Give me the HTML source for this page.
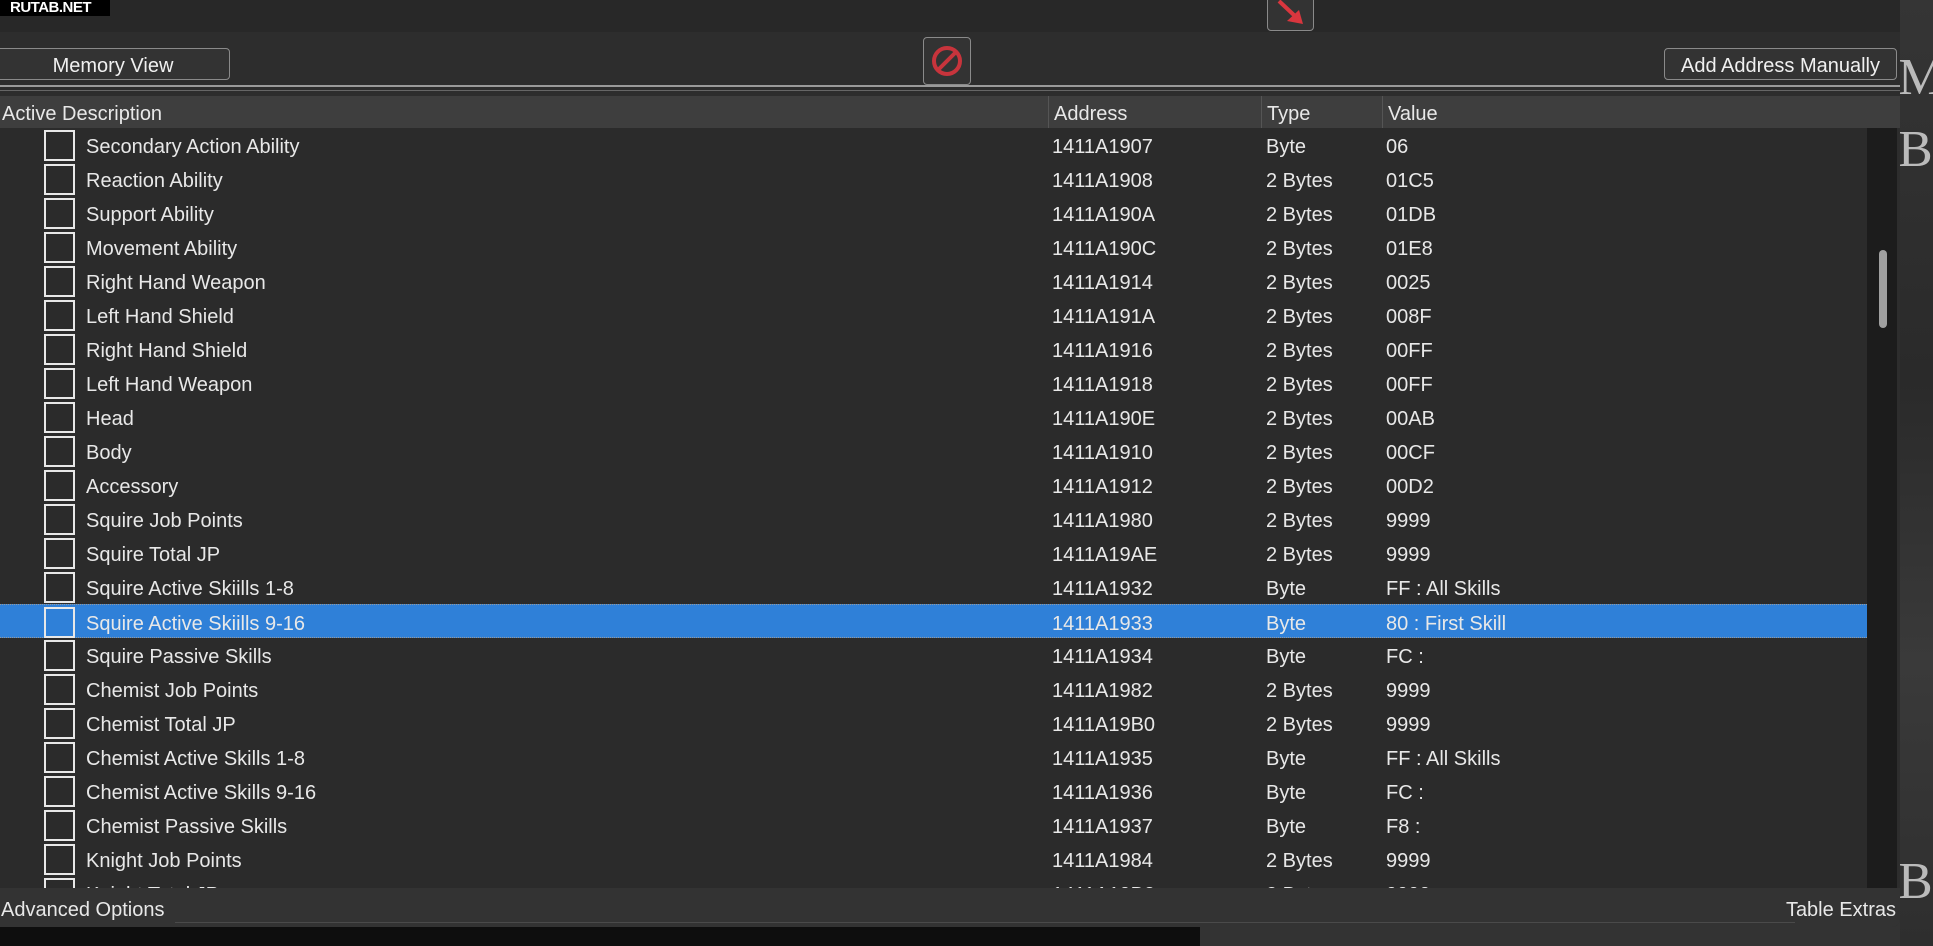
<!DOCTYPE html>
<html><head><meta charset="utf-8"><style>
*{margin:0;padding:0;box-sizing:border-box}
body{width:1933px;height:946px;overflow:hidden;background:#333;font-family:"Liberation Sans",sans-serif;color:#e8e8e8;position:relative}
.bg{position:absolute;left:1900px;top:0;width:33px;height:946px;background:linear-gradient(180deg,#353535,#2a2a2a 40%,#3a3a3a 70%,#2e2e2e)}
.bgl{position:absolute;font-family:"Liberation Serif",serif;color:#bbb;font-size:52px}
.win{position:absolute;left:0;top:0;width:1900px;height:927px;background:#2d2d2d;border-bottom-right-radius:8px}
.topdark{position:absolute;left:0;top:0;width:1900px;height:32px;background:#282828}
.logo{position:absolute;left:0;top:0;width:110px;height:16px;background:#000;color:#fff;font-weight:bold;font-size:15px;line-height:16px;padding-left:10px;letter-spacing:-0.5px}
.btn{position:absolute;border:1px solid #8a8a8a;border-radius:4px;background:#333;color:#f0f0f0;font-size:20px;text-align:center}
.sep{position:absolute;left:0;width:1900px;height:2px;background:#9a9a9a}
.hdr{position:absolute;left:0;top:96px;width:1900px;height:32px;background:#3e3e3e;font-size:20px;line-height:36px}
.hdr span{position:absolute;top:0}
.tbl{position:absolute;left:0;top:128px;width:1867px;height:760px;overflow:hidden;background:#2b2b2b}
.row{position:absolute;left:0;width:1867px;height:34px;font-size:20px;line-height:38px}
.row.sel{background:#2f80d8;border-top:1px dotted #999;border-bottom:1px dotted #999}
.cb{position:absolute;left:44px;top:2px;width:31px;height:31px;border:2px solid #e8e8e8}
.row span{position:absolute;top:0}
.sb{position:absolute;left:1867px;top:128px;width:30px;height:760px;background:#1c1c1c}
.thumb{position:absolute;left:1879px;top:250px;width:8px;height:78px;background:#a0a0a0;border-radius:4px}
.bot{position:absolute;left:0;top:888px;width:1900px;height:39px;background:#333;font-size:20px;line-height:44px;border-bottom-right-radius:8px}
.below{position:absolute;left:0;top:927px;width:1200px;height:19px;background:#0e0e0e}
</style></head><body>
<div class="bg"></div>
<div class="bgl" style="left:1898px;top:48px">M</div>
<div class="bgl" style="left:1898px;top:120px">B</div>
<div class="bgl" style="left:1898px;top:852px">B</div>
<div class="below"></div>
<div class="win">
<div class="topdark"></div>
<div class="logo">RUTAB.NET</div>
<div class="btn" style="left:1267px;top:-4px;width:47px;height:35px">
<svg width="47" height="35" viewBox="0 0 47 35" style="position:absolute;left:-1px;top:0"><line x1="12" y1="4" x2="29" y2="20" stroke="#d9363e" stroke-width="4"/><polygon points="36,27 20,24 32,13" fill="#d9363e"/></svg></div>
<div class="btn" style="left:-4px;top:48px;width:234px;height:32px;line-height:34px">Memory View</div>
<div class="btn" style="left:923px;top:37px;width:48px;height:48px">
<svg width="46" height="46" viewBox="0 0 46 46" style="position:absolute;left:0;top:0"><circle cx="23" cy="23" r="13" fill="none" stroke="#c8343c" stroke-width="4"/><line x1="14" y1="32" x2="32" y2="14" stroke="#c8343c" stroke-width="4"/></svg></div>
<div class="btn" style="left:1664px;top:48px;width:233px;height:32px;line-height:34px">Add Address Manually</div>
<div class="sep" style="top:85px"></div>
<div class="sep" style="top:90px;height:1px;background:#666"></div>
<div class="hdr"><span style="left:2px">Active Description</span><span style="left:1054px">Address</span><span style="left:1267px">Type</span><span style="left:1388px">Value</span>
<div style="position:absolute;left:1048px;top:0;width:1px;height:32px;background:#555"></div>
<div style="position:absolute;left:1261px;top:0;width:1px;height:32px;background:#555"></div>
<div style="position:absolute;left:1382px;top:0;width:1px;height:32px;background:#555"></div></div>
<div class="tbl">
<div class="row" style="top:0"><div class="cb"></div><span style="left:86px">Secondary Action Ability</span><span style="left:1052px">1411A1907</span><span style="left:1266px">Byte</span><span style="left:1386px">06</span></div>
<div class="row" style="top:34px"><div class="cb"></div><span style="left:86px">Reaction Ability</span><span style="left:1052px">1411A1908</span><span style="left:1266px">2 Bytes</span><span style="left:1386px">01C5</span></div>
<div class="row" style="top:68px"><div class="cb"></div><span style="left:86px">Support Ability</span><span style="left:1052px">1411A190A</span><span style="left:1266px">2 Bytes</span><span style="left:1386px">01DB</span></div>
<div class="row" style="top:102px"><div class="cb"></div><span style="left:86px">Movement Ability</span><span style="left:1052px">1411A190C</span><span style="left:1266px">2 Bytes</span><span style="left:1386px">01E8</span></div>
<div class="row" style="top:136px"><div class="cb"></div><span style="left:86px">Right Hand Weapon</span><span style="left:1052px">1411A1914</span><span style="left:1266px">2 Bytes</span><span style="left:1386px">0025</span></div>
<div class="row" style="top:170px"><div class="cb"></div><span style="left:86px">Left Hand Shield</span><span style="left:1052px">1411A191A</span><span style="left:1266px">2 Bytes</span><span style="left:1386px">008F</span></div>
<div class="row" style="top:204px"><div class="cb"></div><span style="left:86px">Right Hand Shield</span><span style="left:1052px">1411A1916</span><span style="left:1266px">2 Bytes</span><span style="left:1386px">00FF</span></div>
<div class="row" style="top:238px"><div class="cb"></div><span style="left:86px">Left Hand Weapon</span><span style="left:1052px">1411A1918</span><span style="left:1266px">2 Bytes</span><span style="left:1386px">00FF</span></div>
<div class="row" style="top:272px"><div class="cb"></div><span style="left:86px">Head</span><span style="left:1052px">1411A190E</span><span style="left:1266px">2 Bytes</span><span style="left:1386px">00AB</span></div>
<div class="row" style="top:306px"><div class="cb"></div><span style="left:86px">Body</span><span style="left:1052px">1411A1910</span><span style="left:1266px">2 Bytes</span><span style="left:1386px">00CF</span></div>
<div class="row" style="top:340px"><div class="cb"></div><span style="left:86px">Accessory</span><span style="left:1052px">1411A1912</span><span style="left:1266px">2 Bytes</span><span style="left:1386px">00D2</span></div>
<div class="row" style="top:374px"><div class="cb"></div><span style="left:86px">Squire Job Points</span><span style="left:1052px">1411A1980</span><span style="left:1266px">2 Bytes</span><span style="left:1386px">9999</span></div>
<div class="row" style="top:408px"><div class="cb"></div><span style="left:86px">Squire Total JP</span><span style="left:1052px">1411A19AE</span><span style="left:1266px">2 Bytes</span><span style="left:1386px">9999</span></div>
<div class="row" style="top:442px"><div class="cb"></div><span style="left:86px">Squire Active Skiills 1-8</span><span style="left:1052px">1411A1932</span><span style="left:1266px">Byte</span><span style="left:1386px">FF : All Skills</span></div>
<div class="row sel" style="top:476px"><div class="cb"></div><span style="left:86px">Squire Active Skiills 9-16</span><span style="left:1052px">1411A1933</span><span style="left:1266px">Byte</span><span style="left:1386px">80 : First Skill</span></div>
<div class="row" style="top:510px"><div class="cb"></div><span style="left:86px">Squire Passive Skills</span><span style="left:1052px">1411A1934</span><span style="left:1266px">Byte</span><span style="left:1386px">FC :</span></div>
<div class="row" style="top:544px"><div class="cb"></div><span style="left:86px">Chemist Job Points</span><span style="left:1052px">1411A1982</span><span style="left:1266px">2 Bytes</span><span style="left:1386px">9999</span></div>
<div class="row" style="top:578px"><div class="cb"></div><span style="left:86px">Chemist Total JP</span><span style="left:1052px">1411A19B0</span><span style="left:1266px">2 Bytes</span><span style="left:1386px">9999</span></div>
<div class="row" style="top:612px"><div class="cb"></div><span style="left:86px">Chemist Active Skills 1-8</span><span style="left:1052px">1411A1935</span><span style="left:1266px">Byte</span><span style="left:1386px">FF : All Skills</span></div>
<div class="row" style="top:646px"><div class="cb"></div><span style="left:86px">Chemist Active Skills 9-16</span><span style="left:1052px">1411A1936</span><span style="left:1266px">Byte</span><span style="left:1386px">FC :</span></div>
<div class="row" style="top:680px"><div class="cb"></div><span style="left:86px">Chemist Passive Skills</span><span style="left:1052px">1411A1937</span><span style="left:1266px">Byte</span><span style="left:1386px">F8 :</span></div>
<div class="row" style="top:714px"><div class="cb"></div><span style="left:86px">Knight Job Points</span><span style="left:1052px">1411A1984</span><span style="left:1266px">2 Bytes</span><span style="left:1386px">9999</span></div>
<div class="row" style="top:748px"><div class="cb"></div><span style="left:86px">Knight Total JP</span><span style="left:1052px">1411A19B2</span><span style="left:1266px">2 Bytes</span><span style="left:1386px">9999</span></div>
</div>
<div class="sb"></div><div class="thumb"></div>
<div class="bot"><span style="position:absolute;left:1px">Advanced Options</span><span style="position:absolute;right:4px">Table Extras</span>
<div style="position:absolute;left:175px;top:34px;width:1620px;height:1px;background:#4a4a4a"></div></div>
</div>
</body></html>
